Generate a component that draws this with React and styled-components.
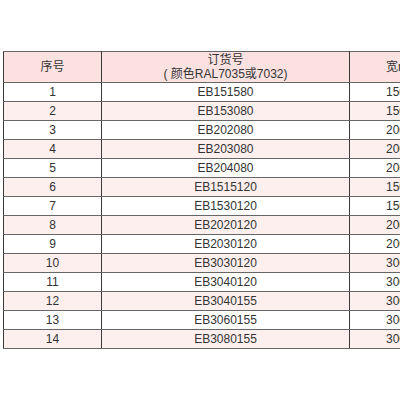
import * as React from 'react';
import styled, { createGlobalStyle } from 'styled-components';

const GlobalStyle = createGlobalStyle`
  html, body {
    margin: 0;
    padding: 0;
    background: #ffffff;
    overflow: hidden;
  }
`;

const Page = styled.div`
  width: 400px;
  height: 400px;
  overflow: hidden;
  padding: 51px 0 0 3px;
  box-sizing: border-box;
  font-family: 'Liberation Sans', Arial, 'Noto Sans CJK SC', sans-serif;
`;

const Table = styled.table`
  border-collapse: collapse;
  table-layout: fixed;
  width: 434px;
  color: #333333;
  font-size: 12px;
`;

const HeadCell = styled.th`
  width: ${p => p.w}px;
  height: 30px;
  padding: 0 0 0 ${p => p.shift || 0}px;
  background: #fbe2e1;
  border-top: 1px solid #666;
  border-bottom: 1px solid #666;
  border-left: 1px solid #3a3a3a;
  border-right: 1px solid #3a3a3a;
  font-weight: normal;
  text-align: center;
  line-height: 14px;
  color: #333;
  white-space: nowrap;
`;

const Row = styled.tr`
  background: ${p => (p.even ? '#fdefee' : '#ffffff')};
`;

const Cell = styled.td`
  height: 18px;
  padding: 0;
  border-top: 1px solid #666;
  border-bottom: 1px solid #666;
  border-left: 1px solid #3a3a3a;
  border-right: 1px solid #3a3a3a;
  text-align: center;
  line-height: 18px;
`;

const rows = [
  ['EB151580', '150'],
  ['EB153080', '150'],
  ['EB202080', '200'],
  ['EB203080', '200'],
  ['EB204080', '200'],
  ['EB1515120', '150'],
  ['EB1530120', '150'],
  ['EB2020120', '200'],
  ['EB2030120', '200'],
  ['EB3030120', '300'],
  ['EB3040120', '300'],
  ['EB3040155', '300'],
  ['EB3060155', '300'],
  ['EB3080155', '300'],
];

export default function App() {
  return (
    <Page>
      <GlobalStyle />
      <Table>
        <thead>
          <tr>
            <HeadCell w={97}>序号</HeadCell>
            <HeadCell w={247}>
              订货号
              <br />( 颜色RAL7035或7032)
            </HeadCell>
            <HeadCell w={80} shift={12}>宽mm</HeadCell>
          </tr>
        </thead>
        <tbody>
          {rows.map((r, i) => (
            <Row key={r[0]} even={i % 2 === 1}>
              <Cell>{i + 1}</Cell>
              <Cell>{r[0]}</Cell>
              <Cell>{r[1]}</Cell>
            </Row>
          ))}
        </tbody>
      </Table>
    </Page>
  );
}
